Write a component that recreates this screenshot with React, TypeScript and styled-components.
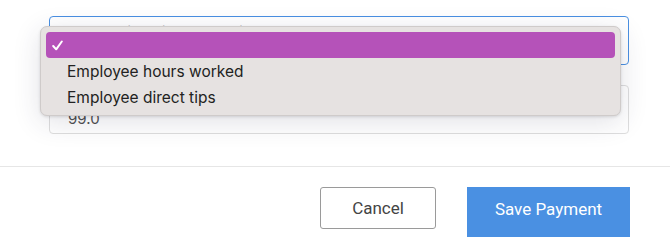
import React from "react";
import styled, {createGlobalStyle} from "styled-components";

const GlobalStyle = createGlobalStyle`
  html, body {
    margin: 0;
    padding: 0;
    background: #fff;
    overflow: hidden;
  }
`;

const Page = styled.div`
  position: relative;
  width: 670px;
  height: 246px;
  font-family: Inter, "Noto Sans", sans-serif;
`;

const Fields = styled.div`
  display: flex;
  flex-direction: column;
  gap: 20px;
  padding: 16px 41px 0 49px;
  height: 167px;
  box-sizing: border-box;
  border-bottom: 1px solid #e6e6e6;
`;

const Field = styled.div<{ focused?: boolean }>`
  display: flex;
  flex-direction: column;
  height: 49px;
  box-sizing: border-box;
  padding: 6px 18px 0 18px;
  border: 1px solid ${p => p.focused ? "#4a90e2" : "#dedede"};
  border-radius: 4px;
  background: #fff;
`;

const FieldLabel = styled.div`
  font-size: 12px;
  line-height: 16px;
  color: #8a8a8a;
`;

const FieldValue = styled.div`
  font-size: 15px;
  line-height: 20px;
  color: #4f4f4f;
  padding-top: 17px;
`;

const Footer = styled.div`
  display: flex;
  justify-content: flex-end;
  align-items: flex-start;
  gap: 31px;
  padding: 20px 40px 0 0;
  font-family: Roboto, "Liberation Sans", sans-serif;
`;

const Button = styled.button<{ primary?: boolean }>`
  font-family: inherit;
  font-size: 17px;
  box-sizing: border-box;
  cursor: pointer;
  border-radius: ${p => p.primary ? "0" : "3px"};
  border: 1px solid ${p => p.primary ? "#4a90e2" : "#9a9a9a"};
  background: ${p => p.primary ? "#4a90e2" : "#fff"};
  color: ${p => p.primary ? "#fff" : "#444"};
  width: ${p => p.primary ? "163px" : "116px"};
  height: ${p => p.primary ? "50px" : "42px"};
  padding: ${p => p.primary ? "0 0 7px" : "0"};
`;

const Menu = styled.div`
  position: absolute;
  left: 40px;
  top: 26px;
  width: 581px;
  box-sizing: border-box;
  padding: 5px;
  background: #e6e2e1;
  border: 1px solid #cfcbca;
  border-radius: 7px;
  box-shadow: 0 6px 28px rgba(40, 40, 80, 0.14), 0 1px 3px rgba(0, 0, 0, 0.12);
`;

const MenuItem = styled.div<{ selected?: boolean }>`
  display: flex;
  align-items: center;
  height: 26px;
  padding-left: 6px;
  border-radius: 4px;
  font-size: 15.5px;
  color: ${p => p.selected ? "#fff" : "#222"};
  background: ${p => p.selected ? "#b552b9" : "transparent"};
`;

const Check = styled.span`
  display: inline-flex;
  width: 15px;
`;

const options = ["", "Employee hours worked", "Employee direct tips"];

export default function App() {
  return (
    <Page>
      <GlobalStyle/>
      <Fields>
        <Field focused>
          <FieldLabel>How Are Tips Paid to Team Being Calculated?</FieldLabel>
        </Field>
        <Field>
          <FieldValue>99.0</FieldValue>
        </Field>
      </Fields>
      <Footer>
        <Button>Cancel</Button>
        <Button primary>Save Payment</Button>
      </Footer>
      <Menu>
        {options.map((option, index) => (
          <MenuItem key={`option-${index}`} selected={index === 0}>
            <Check>
              {index === 0 && (
                <svg width="11" height="11" viewBox="0 0 11 11">
                  <path d="M1.2 6 L4.2 9.3 L9.8 1.5" fill="none" stroke="#fff" strokeWidth="2"
                        strokeLinecap="round" strokeLinejoin="round"/>
                </svg>
              )}
            </Check>
            {option}
          </MenuItem>
        ))}
      </Menu>
    </Page>
  );
}
